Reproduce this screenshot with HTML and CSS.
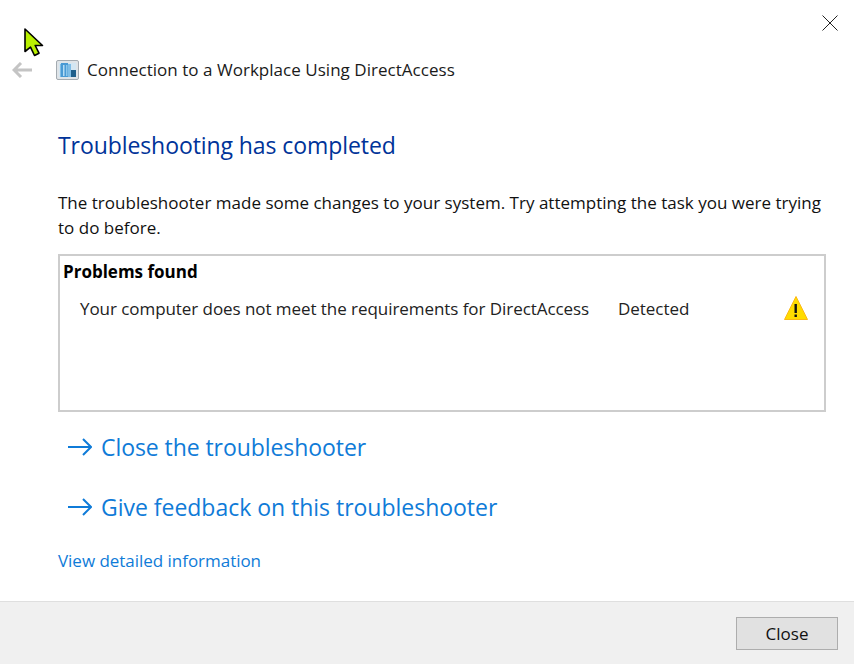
FILE: index.html
```html
<!DOCTYPE html>
<html lang="en">
<head>
<meta charset="utf-8">
<title>Connection to a Workplace Using DirectAccess</title>
<link rel="stylesheet" href="styles.css">
</head>
<body>
<div class="window">
  <svg class="cursor" width="22" height="30" viewBox="0 0 22 30"><path d="M1 1V23.500L6.500 19.200L10.500 27.500L15 25.200L11.200 17.500L18.500 17.500Z" fill="#b9f000" stroke="#000" stroke-width="1.600" stroke-linejoin="round"/></svg>
  <div class="titlebar">
    <svg class="close-x" width="16" height="16" viewBox="0 0 16 16"><path d="M.5 .5L15.500 15.500M15.500 .5L.5 15.500" stroke="#222" stroke-width="1" fill="none"/></svg>
  </div>
  <div class="nav">
    <svg class="back" width="20" height="16" viewBox="0 0 20 16"><path d="M20 8H2M9 1L2 8L9 15" stroke="#c4c4c4" stroke-width="3" fill="none"/></svg>
    <svg class="appicon" width="23" height="20" viewBox="0 0 23 20">
      <rect x=".5" y=".5" width="22" height="19" rx="1.500" fill="#dfe4e8" stroke="#a4abb1"/>
      <rect x="3" y="3" width="17" height="14" fill="#d3e6f2"/>
      <rect x="4" y="4" width="11" height="13" fill="#7fbde6"/>
      <rect x="5" y="3" width="7" height="14" fill="#4a9ad4"/>
      <rect x="7" y="5" width="1.500" height="11" fill="#b5dcf3"/>
      <rect x="10" y="5" width="1.500" height="11" fill="#8cc6ea"/>
      <rect x="15" y="10" width="5" height="7" fill="#1f5f8b"/>
    </svg>
    <span class="nav-title">Connection to a Workplace Using DirectAccess</span>
  </div>
  <main class="content">
    <h1 class="heading">Troubleshooting has completed</h1>
    <p class="intro">The troubleshooter made some changes to your system. Try attempting the task you were trying to do before.</p>
    <section class="panel">
      <h2 class="panel-title">Problems found</h2>
      <div class="problem">
        <span class="problem-name">Your computer does not meet the requirements for DirectAccess</span>
        <span class="problem-state">Detected</span>
        <svg class="warn" width="24" height="24" viewBox="0 0 24 24"><path d="M12 .5L23.500 23.500H.5Z" fill="#ffdc00" stroke="#fcb814" stroke-width="1"/><rect x="10.500" y="8" width="2.400" height="9" fill="#111"/><rect x="10.500" y="18.500" width="2.400" height="2.500" fill="#111"/></svg>
      </div>
    </section>
    <a class="action" href="#"><svg class="arrow" width="24" height="18" viewBox="0 0 24 18"><path d="M0 9H23M15 1L23 9L15 17" stroke="#0f7bd8" stroke-width="2" fill="none"/></svg>Close the troubleshooter</a>
    <a class="action second" href="#"><svg class="arrow" width="24" height="18" viewBox="0 0 24 18"><path d="M0 9H23M15 1L23 9L15 17" stroke="#0f7bd8" stroke-width="2" fill="none"/></svg>Give feedback on this troubleshooter</a>
    <a class="details" href="#">View detailed information</a>
  </main>
  <footer class="footer"><button class="close-btn">Close</button></footer>
</div>
</body>
</html>
```
FILE: styles.css
```css
* { box-sizing: border-box; }
html, body { margin: 0; padding: 0; }
body { background: #fff; font-family: "Open Sans", "Noto Sans", sans-serif; color: #111; }
.window { position: relative; width: 854px; height: 664px; display: flex; flex-direction: column; overflow: hidden; }
.cursor { position: absolute; left: 24px; top: 28px; }
.titlebar { height: 58px; display: flex; justify-content: flex-end; padding: 15px 16px 0 0; flex: none; }
.nav { height: 23px; display: flex; align-items: center; flex: none; padding-left: 12px; }
.back { margin-right: 24px; }
.appicon { margin-right: 8px; }
.nav-title { font-size: 17px; letter-spacing: .03px; color: #1a1a1a; }
.content { flex: 1; padding: 0 28px 0 58px; display: flex; flex-direction: column; align-items: flex-start; }
.heading { margin: 48px 0 0; font-size: 23px; line-height: 32px; font-weight: 400; color: #003399; letter-spacing: -.08px; }
.intro { margin: 29px 0 0; font-size: 17px; line-height: 25px; letter-spacing: .01px; color: #111; }
.panel { margin-top: 14px; width: 768px; height: 158px; border: 2px solid #cdcdcd; padding: 4px 3px; }
.panel-title { margin: 0; font-size: 17px; line-height: 24px; font-weight: 700; color: #000; }
.problem { display: flex; align-items: center; margin-top: 12px; padding-left: 17px; height: 24px; }
.problem-name { font-size: 17px; width: 538px; letter-spacing: -.06px; flex: none; white-space: nowrap; color: #222; }
.problem-state { font-size: 17px; width: 166px; letter-spacing: -.05px; flex: none; color: #222; }
.warn { flex: none; }
.action { display: flex; align-items: center; gap: 10px; margin: 19px 0 0 10px; padding-left: 0; font-size: 23px; line-height: 32px; color: #0f7bd8; text-decoration: none; letter-spacing: -.07px; }
.arrow { margin-right: -1px; }
.action.second { margin-top: 28px; letter-spacing: -.02px; }
.details { margin-top: 26px; font-size: 17px; line-height: 24px; letter-spacing: -.03px; color: #0f7bd8; text-decoration: none; }
.footer { height: 63px; flex: none; background: #f0f0f0; border-top: 1px solid #dfdfdf; display: flex; justify-content: flex-end; align-items: flex-start; padding: 15px 16px 0 0; }
.close-btn { width: 102px; height: 33px; background: #e1e1e1; border: 1px solid #adadad; font: 17px "Open Sans", sans-serif; color: #111; padding: 0; }
```
